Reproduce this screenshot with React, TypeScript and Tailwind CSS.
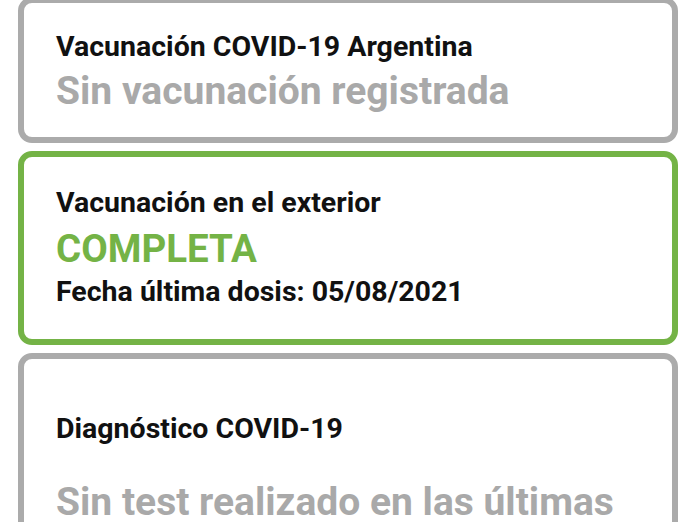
import React from "react";

export default function App() {
  return (
    <div
      className="h-[522px] w-[696px] overflow-hidden bg-white"
      style={{ fontFamily: "Roboto, 'Noto Sans', sans-serif" }}
    >
      <div className="-mt-[3px] flex flex-col gap-[8px] px-[18px]">
        {/* vacunación nacional */}
        <div className="rounded-[14px] border-[6px] border-[#ababab] bg-white px-[32px] pt-[27px] pb-[23px]">
          <p className="text-[28.5px] leading-[34px] font-bold text-[#111111]">
            Vacunación COVID-19 Argentina
          </p>
          <p className="mt-[4px] text-[39px] leading-[46px] font-bold text-[#a9a9a9]">
            Sin vacunación registrada
          </p>
        </div>

        {/* vacunación en el exterior */}
        <div className="rounded-[14px] border-[6px] border-[#74b346] bg-white px-[32px] pt-[29px] pb-[30px]">
          <p className="text-[28.5px] leading-[34px] font-bold text-[#111111]">
            Vacunación en el exterior
          </p>
          <p className="mt-[7px] text-[38.5px] leading-[44px] font-bold text-[#74b346]">
            COMPLETA
          </p>
          <p className="mt-[4px] text-[28.5px] leading-[34px] font-bold text-[#111111]">
            Fecha última dosis: 05/08/2021
          </p>
        </div>

        {/* diagnóstico */}
        <div className="rounded-[14px] border-[6px] border-[#ababab] bg-white px-[32px] pt-[53px] pb-[40px]">
          <p className="text-[28.5px] leading-[34px] font-bold text-[#111111]">
            Diagnóstico COVID-19
          </p>
          <p className="mt-[33px] text-[39px] leading-[46px] font-bold text-[#a9a9a9]">
            Sin test realizado en las últimas 72 horas
          </p>
        </div>
      </div>
    </div>
  );
}
